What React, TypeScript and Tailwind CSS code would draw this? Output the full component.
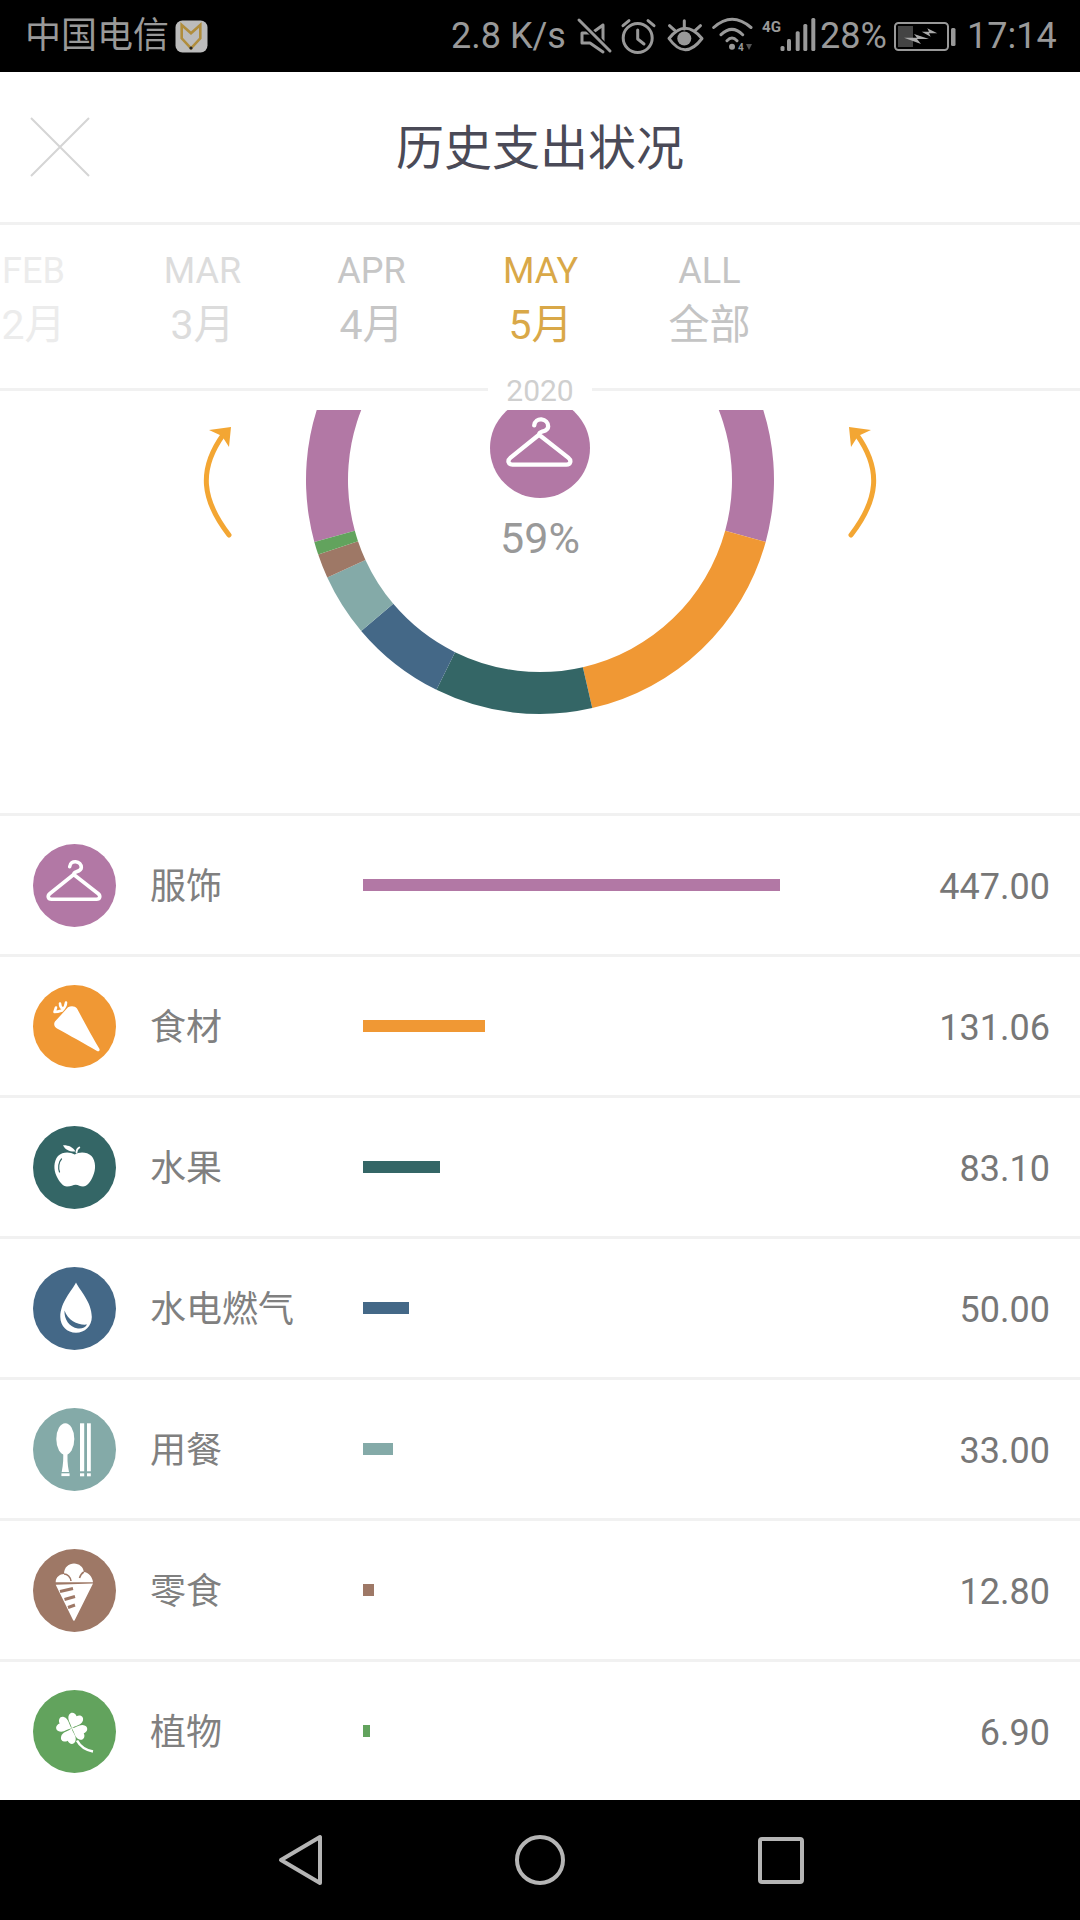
import React from "react";

const FONT = "font-[Roboto,'Noto_Sans_CJK_SC',sans-serif]";

const Hanger = () => (
  <path
    d="M36.7 22.7C37 19 40 17.5 42.7 17.7C46 18 48.3 20.5 48.3 23.5C48.3 26 46 27 43.5 27.8C41.5 28.4 40.7 29 40.7 30.5L17 49.5C14 52 15 55.3 18.5 55.3H63.5C67 55.3 68 52 65 49.5L40.7 30.5"
    fill="none"
    stroke="#fff"
    strokeWidth="3.6"
    strokeLinecap="round"
    strokeLinejoin="round"
  />
);

const Carrot = () => (
  <g>
    <path d="M35 22.3C38 20.8 42 21 44 23.5C49 33 60 53 66.5 64C67 65.8 65.5 66.6 64 66C52 59 36 50 24 43.5C21 41.5 20.5 38.5 22 36.5Z" fill="#fff" />
    <path d="M27 18.5C27 21 28 23 30 24M33 17.5C33 20 31.5 23 29 25.5C26 26.5 23 27 21.5 27M23 22.5L21.5 27" fill="none" stroke="#fff" strokeWidth="2.6" strokeLinecap="round" />
  </g>
);

const Apple = () => (
  <g>
    <path d="M41.7 28.5C46 25.5 54 25.5 58.5 30C63 35 63 44 60 50C57.5 56 54 60.5 50 60.5C47 60.5 45.5 58.7 42.7 58.7C40 58.7 38 60.5 34 60.5C30 60.5 26 55.5 23.5 50C20.5 44 20.5 35 25 30C29.5 25.5 37 25.5 41.7 28.5Z" fill="#fff" />
    <path d="M30 19.3C35 19 40 21 42.5 25.5C37.5 26 32.5 24.5 30 19.3Z" fill="#fff" />
    <path d="M43.5 26.5C43.5 24.5 44.5 22.5 46.3 21.5" fill="none" stroke="#fff" strokeWidth="1.8" strokeLinecap="round" />
    <path d="M28.5 33C25.5 36 25 42 26.5 46" fill="none" stroke="#346666" strokeWidth="1.2" strokeLinecap="round" />
  </g>
);

const Drop = () => (
  <g>
    <path d="M43 15.5C46.5 23 58.8 35 58.8 50C58.8 59 51.8 65.8 43 65.8C34.2 65.8 27.3 59 27.3 50C27.3 35 39.5 23 43 15.5Z" fill="#fff" />
    <path d="M31.5 43.5C31 52 36 60 45 61.5C49 62 52.5 60.5 54 57.5C46 58.5 35 54 31.5 43.5Z" fill="#446887" />
  </g>
);

const Utensils = () => (
  <g fill="#fff">
    <ellipse cx="32.3" cy="31" rx="9" ry="15.8" />
    <path d="M30 42H34.8C34.2 50 34.3 56 36 64H28.7C30.3 56 30.6 50 30 42Z" />
    <rect x="28.4" y="65.3" width="8.2" height="2.8" />
    <rect x="47" y="15.3" width="4.2" height="48" />
    <rect x="47" y="65.3" width="4.2" height="3" />
    <rect x="54" y="15.3" width="3.8" height="48" />
    <rect x="54" y="65.3" width="3.8" height="3" />
  </g>
);

const IceCream = () => (
  <g>
    <path d="M22.7 33.2C22.7 28 27 25 31 25C31 18 36 14.5 41 14.5C46 14.5 50.5 18 50.8 23C55.5 23.5 59.5 28 60 33.2Z" fill="#fff" />
    <path d="M31 25C34.5 25 37.5 28 38 32M50.8 23C49 24 47.5 26 46.5 29" fill="none" stroke="#9e7866" strokeWidth="1.6" />
    <path d="M22.7 35.8L60 34.6L41.7 71.2C41 72 40.3 71.8 40 71Z" fill="#fff" />
    <path d="M27 42.5L40 39.5M31.5 50.5L42 47.5M35 58.5L42 56" fill="none" stroke="#9e7866" strokeWidth="3" />
  </g>
);

const leaf = "M0 0C-2 -4 -8 -6 -7.5 -11.5C-7 -15.5 -2.5 -16 0 -13C2.5 -16 7 -15.5 7.5 -11.5C8 -6 2 -4 0 0Z";
const Clover = () => (
  <g>
    <g transform="translate(38.7 38.3)" fill="#fff">
      <path d={leaf} transform="rotate(22)" />
      <path d={leaf} transform="rotate(-68)" />
      <path d={leaf} transform="rotate(198)" />
      <path d={leaf} transform="rotate(112)" />
    </g>
    <path d="M44 50.5C47 56 52 60 60 61.5" fill="none" stroke="#fff" strokeWidth="2.6" />
  </g>
);

const rows = [
  { name: "服饰", value: "447.00", amount: 447, color: "#b278a5", w: 417, Icon: Hanger },
  { name: "食材", value: "131.06", amount: 131.06, color: "#f09834", w: 122, Icon: Carrot },
  { name: "水果", value: "83.10", amount: 83.1, color: "#346666", w: 77, Icon: Apple },
  { name: "水电燃气", value: "50.00", amount: 50, color: "#446887", w: 46, Icon: Drop },
  { name: "用餐", value: "33.00", amount: 33, color: "#84aaa8", w: 30, Icon: Utensils },
  { name: "零食", value: "12.80", amount: 12.8, color: "#9e7866", w: 11, Icon: IceCream },
  { name: "植物", value: "6.90", amount: 6.9, color: "#62a35d", w: 7, Icon: Clover },
];

const CX = 540;
const CY = 480;
const R = 234;
const r = 192;
const total = rows.reduce((s, x) => s + x.amount, 0);

function slicePath(a0: number, a1: number) {
  const p = (rad: number, a: number) => {
    const t = (a * Math.PI) / 180;
    return `${(CX + rad * Math.cos(t)).toFixed(2)} ${(CY + rad * Math.sin(t)).toFixed(2)}`;
  };
  const large = a1 - a0 > 180 ? 1 : 0;
  return `M${p(R, a0)}A${R} ${R} 0 ${large} 1 ${p(R, a1)}L${p(r, a1)}A${r} ${r} 0 ${large} 0 ${p(r, a0)}Z`;
}

const slices = (() => {
  let a = -90 - ((rows[0].amount / total) * 360) / 2;
  return rows.map((x) => {
    const span = (x.amount / total) * 360;
    const d = slicePath(a, a + span);
    a += span;
    return { d, color: x.color };
  });
})();

const tabs = [
  { en: "FEB", cn: "2月", c: "text-[#ececec]" },
  { en: "MAR", cn: "3月", c: "text-[#dcdcdc]" },
  { en: "APR", cn: "4月", c: "text-[#c6c6c6]" },
  { en: "MAY", cn: "5月", c: "text-[#d9a848]" },
  { en: "ALL", cn: "全部", c: "text-[#c4c4c4]" },
];

const StatusIcons = () => (
  <svg width="243" height="38" viewBox="575 18 243 38" className="block shrink-0">
    <g fill="none" stroke="#999" strokeWidth="3" strokeLinecap="round" strokeLinejoin="round">
      <path d="M602 26L591 34H581V44H589L602 53M602 26V43" />
      <path d="M578 21L609 52" stroke="#000" strokeWidth="6" />
      <path d="M578 21L609 52" />
      <circle cx="636.7" cy="39" r="14.5" />
      <path d="M636.7 31V40L643 45M622 26.7L628 21.7M647 21.7L653 26.7" />
      <path d="M668 39.5Q684 19 701 39.5Q684 62 668 39.5Z" />
      <path d="M683.3 21.7V30M668.5 26.7L674 31.7M699.5 26.7L694 31.7" />
      <path d="M712.7 28.5Q731 12 750 28.5M720 35.7Q731 25 741.7 35.7M726 41.7Q731 36.5 736 41.7" />
    </g>
    <circle cx="683.3" cy="39.5" r="7" fill="#999" />
    <circle cx="731" cy="47.7" r="3" fill="#999" />
    <text x="737" y="52" fontSize="10" fill="#999" fontFamily="Roboto, sans-serif" fontWeight="700">4</text>
    <path d="M745 45H751L748 51Z" fill="#555" />
    <text x="761" y="33" fontSize="14" fontWeight="700" fill="#999" fontFamily="Roboto, sans-serif" textLength="19" lengthAdjust="spacingAndGlyphs">4G</text>
    <g fill="#999">
      <rect x="779.5" y="47" width="4" height="5" rx="1.5" />
      <rect x="786" y="40" width="4" height="12" rx="1.5" />
      <rect x="794.7" y="32.3" width="4" height="19.7" rx="1.5" />
      <rect x="802.3" y="25" width="4" height="27" rx="1.5" />
      <rect x="810.3" y="19" width="4" height="33" rx="1.5" />
    </g>
  </svg>
);

const Battery = () => (
  <svg width="62" height="32" viewBox="895 20 62 32" className="block shrink-0">
    <rect x="896" y="23" width="53" height="27" rx="3.5" fill="none" stroke="#999" strokeWidth="2" />
    <rect x="899" y="26" width="15" height="21" fill="#444" />
    <rect x="952" y="28" width="4.5" height="18" rx="1.5" fill="#999" />
    <path d="M905 37.7H918L915 34L930 39H918L922 44Z" fill="#aaa" />
    <path d="M922.7 31.7H930L928.3 28.3L938.3 33.3H930L931.7 36.7Z" fill="#aaa" />
  </svg>
);

export default function App() {
  return (
    <div className={`w-[1080px] h-[1920px] flex flex-col overflow-hidden bg-white ${FONT}`}>
      {/* status bar */}
      <div className="h-[72px] shrink-0 bg-black flex items-center text-[#999] text-[36px]">
        <span className="ml-[25px] leading-none">中国电信</span>
        <svg width="33" height="33" viewBox="0 0 33 33" className="ml-[6px] block">
          <rect x="0.5" y="0.5" width="32" height="32" rx="7" fill="#bcbcbc" />
          <path d="M6.7 5L16 13.3L25.3 5V18.3L16 28.3L6.7 18.3Z" fill="none" stroke="#b08d3c" strokeWidth="2.6" />
          <circle cx="16" cy="28" r="1.6" fill="#222" />
        </svg>
        <span className="ml-[243px] leading-none w-[125px]">2.8 K/s</span>
        <StatusIcons />
        <span className="ml-[1px] w-[74px] leading-none">28%</span>
        <Battery />
        <span className="ml-[11px] leading-none">17:14</span>
      </div>

      {/* title */}
      <div className="h-[153px] shrink-0 border-b-[3px] border-[#f1f1f1] flex items-center relative">
        <svg width="60" height="60" viewBox="0 0 60 60" className="ml-[30px] block">
          <path d="M1 1L59 59M59 1L1 59" stroke="#d5d5d5" strokeWidth="2" fill="none" />
        </svg>
        <div className="absolute left-0 right-0 top-[50px] text-center text-[48px] leading-[54px] text-[#4a4a57]">历史支出状况</div>
      </div>

      {/* month tabs */}
      <div className="h-[166px] shrink-0 border-b-[3px] border-[#f1f1f1] relative overflow-visible">
        <div className="flex ml-[-51px] pt-[28px]">
          {tabs.map((t) => (
            <div key={t.en} className={`w-[169px] shrink-0 flex flex-col items-center ${t.c}`}>
              <div className="text-[36px] leading-[36px]">{t.en}</div>
              <div className="text-[41px] leading-[44px] mt-[14px]">{t.cn}</div>
            </div>
          ))}
        </div>
        <div className="absolute left-[488px] w-[104px] top-[150px] h-[34px] bg-white text-center text-[#cfcfcf] text-[30px] leading-[32px] z-10">2020</div>
      </div>

      {/* chart */}
      <div className="h-[422px] shrink-0 pt-[19px] relative">
        <svg width="1080" height="403" viewBox="0 410 1080 403" className="block">
          {slices.map((s) => (
            <path key={s.color} d={s.d} fill={s.color} />
          ))}
          <circle cx="540" cy="448" r="50" fill="#b278a5" />
          <g transform="translate(490.2 398.2) scale(1.2)">
            <Hanger />
          </g>
          <g fill="none" stroke="#f3a633" strokeWidth="5" strokeLinecap="round">
            <path d="M229 535C202 500 198 470 223 435" />
            <path d="M851 535C878 500 882 470 857 435" />
          </g>
          <path d="M231 427L209 430L222 436L229 447Z" fill="#f3a633" />
          <path d="M849 427L871 430L858 436L851 447Z" fill="#f3a633" />
        </svg>
        <div className="absolute left-0 right-0 top-[127px] text-center text-[43px] leading-[40px] text-[#999]">59%</div>
      </div>

      {/* list */}
      <div className="flex-1 overflow-hidden">
        {rows.map((row) => (
          <div key={row.name} className="h-[141px] box-border border-t-[3px] border-[#f1f1f1] flex items-center">
            <svg width="83" height="83" viewBox="0 0 83 83" className="ml-[33px] shrink-0 block">
              <circle cx="41.5" cy="41.5" r="41.5" fill={row.color} />
              <row.Icon />
            </svg>
            <div className="ml-[34px] mt-[3px] w-[213px] shrink-0 text-[36px] leading-[44px] text-[#808080]">{row.name}</div>
            <div className="h-[12px] shrink-0" style={{ width: row.w, backgroundColor: row.color }} />
            <div className="flex-1 mt-[3px] pr-[30px] text-right text-[36px] leading-[44px] text-[#777]">{row.value}</div>
          </div>
        ))}
      </div>

      {/* nav */}
      <div className="h-[120px] shrink-0 bg-black flex items-center justify-center">
        <svg width="1080" height="120" viewBox="0 1800 1080 120" className="block">
          <g fill="none" stroke="#b5b5b5" strokeWidth="4" strokeLinejoin="round">
            <path d="M320 1837V1883L281 1860Z" />
            <circle cx="540" cy="1860" r="23" />
            <rect x="760" y="1839" width="42" height="43" rx="2" />
          </g>
        </svg>
      </div>
    </div>
  );
}
